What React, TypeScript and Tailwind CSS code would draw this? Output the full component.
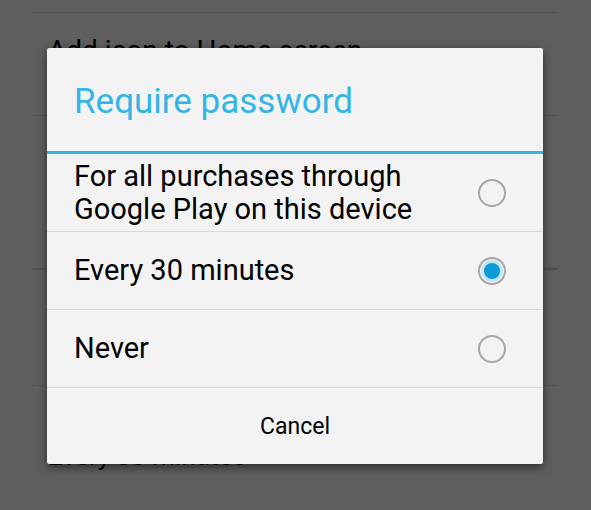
import React, { useState } from "react";

const options = [
  { id: "all", label: "For all purchases through\nGoogle Play on this device" },
  { id: "30", label: "Every 30 minutes" },
  { id: "never", label: "Never" },
];

const Radio = ({ checked }: { checked: boolean }) => {
  return (
    <span className="relative flex h-[28px] w-[28px] shrink-0 items-center justify-center rounded-full border-2 border-[#a6a6a6]">
      {checked && (
        <span className="flex h-[22px] w-[22px] items-center justify-center rounded-full bg-[#c4e6f3]">
          <span className="h-[16px] w-[16px] rounded-full bg-[#0b9ad6]" />
        </span>
      )}
    </span>
  );
};

export default function App() {
  const [selected, setSelected] = useState("30");

  return (
    <div
      className="relative h-[510px] w-[591px] overflow-hidden bg-[#5e5e5e] text-black"
      style={{ fontFamily: "Roboto, 'Noto Sans', sans-serif" }}
    >
      {/* settings page behind the dialog (dimmed) */}
      <div className="flex flex-col pl-[32px] pr-[33px] pt-[12px]">
        <div className="h-px bg-[#545454]" />
        <div className="h-[102px] pl-[16px] pt-[20px] text-[28px] leading-[36px]">
          Add icon to Home screen
        </div>
        <div className="h-px bg-[#545454]" />
        <div className="h-[152px] pl-[16px] pt-[24px] text-[28px]">Clear search history</div>
        <div className="h-[2px] bg-[#4f4f4f]" />
        <div className="h-[115px] pl-[16px] pt-[30px] text-[28px]">Content filtering</div>
        <div className="h-px bg-[#545454]" />
        <div className="flex h-[121px] flex-col pl-[16px] pt-[18px]">
          <span className="text-[28px] leading-[36px]">Require password</span>
          <span className="text-[26px] leading-[32px]">Every 30 minutes</span>
        </div>
        <div className="pl-[16px] text-[20px] font-bold leading-[24px]">ABOUT</div>
      </div>

      {/* dialog */}
      <div className="absolute left-[47px] top-[48px] flex w-[496px] flex-col rounded-[2px] bg-[#f3f3f3] shadow-[0_3px_10px_rgba(0,0,0,0.55)]">
        <div className="flex h-[103px] items-center pl-[27px] pt-[5px] text-[35px] text-[#33b5e5]">
          Require password
        </div>
        <div className="h-[3px] bg-[#33b5e5]" />
        {options.map((o) => (
          <div key={o.id}>
            <div
              className="flex h-[77px] cursor-pointer items-center justify-between pl-[27px] pr-[37px]"
              onClick={() => setSelected(o.id)}
            >
              <span className="whitespace-pre-line text-[29px] leading-[33px] text-black">
                {o.label}
              </span>
              <Radio checked={selected === o.id} />
            </div>
            <div className="h-px bg-[#d9d9d9]" />
          </div>
        ))}
        <button className="flex h-[76px] items-center justify-center pt-[3px] text-[23px] text-black">
          Cancel
        </button>
      </div>
    </div>
  );
}
